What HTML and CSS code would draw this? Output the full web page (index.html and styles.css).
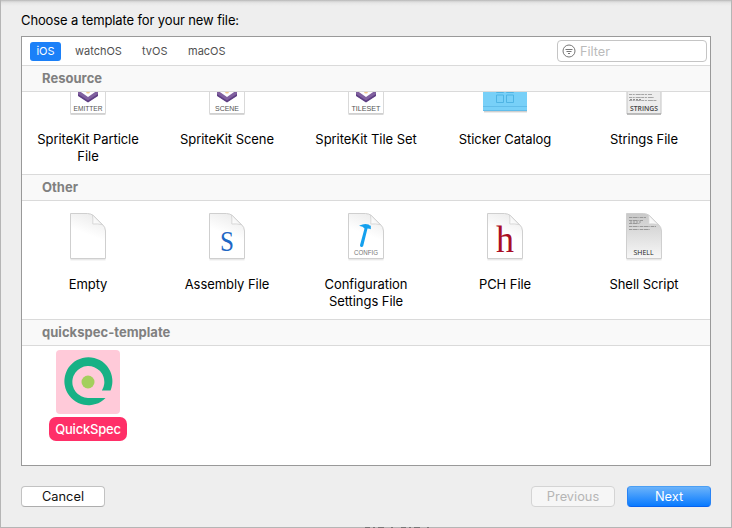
FILE: index.html
```html
<!DOCTYPE html>
<html lang="en">
<head>
<meta charset="utf-8">
<title>Choose a template</title>
<link rel="stylesheet" href="styles.css">
</head>
<body>
<svg class="defs" width="0" height="0">
  <defs>
    <linearGradient id="paper" gradientUnits="userSpaceOnUse" x1="28" y1="34" x2="38" y2="8"><stop offset=".2" stop-color="#fff"/><stop offset="1" stop-color="#ebebeb"/></linearGradient>
    <linearGradient id="script" x1="0" y1="0" x2="0" y2="1"><stop offset="0" stop-color="#c9c9c9"/><stop offset="1" stop-color="#f7f7f7"/></linearGradient>
    <linearGradient id="fold" x1="0" y1="1" x2="1" y2="0"><stop offset="0" stop-color="#fff"/><stop offset=".6" stop-color="#f4f4f4"/><stop offset="1" stop-color="#dcdcdc"/></linearGradient>
    <g id="outline">
      <path d="M14.500 54.800h35" stroke="#000" stroke-opacity=".13"/>
      <path d="M14.500 8.500h17Q35 8.500 38 11l8 8Q49.500 22 49.500 26v27.500h-35z" stroke="#cfcfcf"/>
    </g>
    <g id="corner"><path d="M36.500 9.800q.6 4 .3 9.200 5-.5 9.500.7z" fill="url(#fold)" stroke="#d0d0d0" stroke-width=".8"/></g>
    <g id="kit">
      <path d="M14.500 8.500h35v45h-35z" fill="#fff" stroke="#d9d9d9"/>
      <path d="M14.500 54.300h35" stroke="#000" stroke-opacity=".2"/>
      <path d="M22 30l10 7 10-7v5.500L32 42l-10-6.500z" fill="#80609f"/>
      <path d="M22 34l10 6.500L42 34v2L32 42.500 22 36z" fill="#5f3f84"/>
      <circle cx="32" cy="31.500" r="2" fill="#f3c98e"/>
    </g>
  </defs>
</svg>
<main class="sheet">
  <h1 class="prompt"><span>Choose a template for your new file:</span></h1>
  <section class="chooser">
    <nav class="toolbar">
      <span class="tab active">iOS</span>
      <span class="tab watch">watchOS</span>
      <span class="tab tv">tvOS</span>
      <span class="tab mac">macOS</span>
      <label class="filter">
        <svg width="14" height="14" viewBox="0 0 14 14" fill="none" stroke="#777"><circle cx="7" cy="7" r="6"/><path d="M3.500 5.500h7M4.500 7.500h5M6 9.500h2"/></svg>
        <span>Filter</span>
      </label>
    </nav>
    <h2 class="heading resource">Resource</h2>
    <div class="grid clipped">
      <div class="item"><svg class="icon" viewBox="0 0 64 64" fill="none"><use href="#kit"/><text x="32" y="51" textLength="29" lengthAdjust="spacingAndGlyphs" class="tag">EMITTER</text></svg><span class="w-particle">SpriteKit Particle<br>File</span></div>
      <div class="item"><svg class="icon" viewBox="0 0 64 64" fill="none"><use href="#kit"/><text x="32" y="51" textLength="24" lengthAdjust="spacingAndGlyphs" class="tag">SCENE</text></svg><span>SpriteKit Scene</span></div>
      <div class="item"><svg class="icon" viewBox="0 0 64 64" fill="none"><use href="#kit"/><text x="32" y="51" textLength="29" lengthAdjust="spacingAndGlyphs" class="tag">TILESET</text></svg><span>SpriteKit Tile Set</span></div>
      <div class="item"><svg class="icon" viewBox="0 0 64 64" fill="none"><path d="M11 51.800h43" stroke="#bbb"/><path d="M10 8h44v43H10z" fill="#78d0f8"/><path d="M10 46.500h44M10 50.500h44" stroke="#62bdea"/><path d="M23.500 24.500h7v8h-7zm10 0h7v8h-7zm-10 10.500h7v7.500h-7zm10 0h7v7.500h-7z" stroke="#4fb4e4"/></svg><span>Sticker Catalog</span></div>
      <div class="item"><svg class="icon" viewBox="0 0 64 64"><path d="M15 8h34v46H15z" fill="#ededed" stroke="#c4c4c4"/><path d="M15 54h34" stroke="#999"/><path d="M17 34.500h23M17 37.500h25M17 40.500h28" stroke="#a5a5a5" stroke-dasharray="3 .7 2 1 5 .5"/><path d="M18 39.500h11" stroke="#909090" stroke-dasharray="2 1"/><text x="32" y="50.500" textLength="28" lengthAdjust="spacingAndGlyphs" class="tag dark">STRINGS</text></svg><span>Strings File</span></div>
    </div>
    <h2 class="heading other">Other</h2>
    <div class="grid">
      <div class="item"><svg class="icon" viewBox="0 0 64 64" fill="url(#paper)"><use href="#outline"/><use href="#corner"/></svg><span>Empty</span></div>
      <div class="item"><svg class="icon" viewBox="0 0 64 64" fill="url(#paper)"><use href="#outline"/><use href="#corner"/><text x="32" y="46" class="letter blue" textLength="14" lengthAdjust="spacingAndGlyphs">S</text></svg><span>Assembly File</span></div>
      <div class="item"><svg class="icon" viewBox="0 0 64 64" fill="url(#paper)"><use href="#outline"/><use href="#corner"/><path d="M25.500 20.500q5-2.500 9-1 .8.300 1.200 1l1.100.3v3.500l-1.300-.5-2-.3-4.300 17.500q-.8 1.500-2.500.8-1-.5-.6-2L30.500 23.500q-1.500-2.600-5-2.500z" fill="#14a0ee"/><text x="32" y="50" textLength="24" lengthAdjust="spacingAndGlyphs" class="tag small">CONFIG</text></svg><span>Configuration<br>Settings File</span></div>
      <div class="item"><svg class="icon" viewBox="0 0 64 64" fill="url(#paper)"><use href="#outline"/><use href="#corner"/><text x="32" y="47" class="letter red" textLength="18" lengthAdjust="spacingAndGlyphs">h</text></svg><span>PCH File</span></div>
      <div class="item"><svg class="icon" viewBox="0 0 64 64" fill="url(#script)"><use href="#outline"/><use href="#corner"/><path d="M17 12.500h17M17 15.500h14M17 18.500h11M17 21.500h27M17 24.500h21" stroke="#999" stroke-dasharray="3 .6 5 .8 1 .6"/><path d="M18 17h12" stroke="#999" stroke-dasharray="2 1"/><text x="31.500" y="50" textLength="20" lengthAdjust="spacingAndGlyphs" class="tag shell">SHELL</text></svg><span>Shell Script</span></div>
    </div>
    <h2 class="heading quick">quickspec-template</h2>
    <div class="grid last">
      <div class="item selected"><svg class="icon" viewBox="0 0 64 64"><rect width="64" height="64" rx="4" fill="#ffcad9"/><path d="M45.900 40.500A16 16 0 1 0 32 48h17.500A24 24 0 1 1 54.500 40.500z" fill="#17b185"/><circle cx="32" cy="32" r="6.500" fill="#a4cf5d"/></svg><span>QuickSpec</span></div>
    </div>
  </section>
  <footer class="actions">
    <button class="button cancel">Cancel</button>
    <button class="button previous" disabled>Previous</button>
    <button class="button next">Next</button>
  </footer>
</main>
<svg class="edge" width="732" height="1"><path d="M365 .5h70" stroke="#777" stroke-dasharray="5 3 2 3 6 7 2 8"/></svg>
</body>
</html>
```
FILE: styles.css
```css
* { box-sizing: border-box; }
body { margin: 0; background: #b5b5b5; font: 13px/17px Inter, "Liberation Sans", sans-serif; letter-spacing: -.06px; color: #000; }
.defs, .edge { display: block; }
.sheet {
  width: 730px;
  height: 527px;
  margin-left: 1px;
  padding: 12px 20px 0;
  background: linear-gradient(#b1b1b1 0, #d0d0d0 1px, #e6e6e6 3px, #eee 6px);
}
.prompt { margin: 0; height: 24px; font-size: 13px; line-height: 17px; font-weight: 400; letter-spacing: -.12px; }
.chooser { width: 690px; height: 430px; border: 1px solid #999; background: #fff; overflow: hidden; }
.toolbar { height: 28px; display: flex; align-items: center; padding: 0 3px 0 8px; font-size: 11px; letter-spacing: 0; color: #505050; }
.tab { line-height: 19px; }
.active { width: 31px; text-align: center; border-radius: 3px; color: #fff; background: #1b80f8; margin-right: 14px; }
.watch { width: 67px; }
.tv { width: 46px; }
.filter { margin-left: auto; width: 150px; height: 22px; border: 1px solid #c5c5c5; border-radius: 4px; display: flex; align-items: center; padding-left: 4px; gap: 4px; color: #bbb; font-size: 12.7px; }
.heading { height: 27px; margin: 0; padding-left: 20px; border: solid #dadada; border-width: 1px 0; background: #f9f9f9; color: #808080; font-size: 13px; line-height: 25px; font-weight: 700; letter-spacing: .03px; }
.grid { height: 118px; padding: 4px 6px 0; display: grid; grid-template-columns: repeat(5, 120px); column-gap: 19px; align-items: start; }
.clipped { height: 82px; align-content: end; overflow: hidden; }
.clipped .item { height: 114px; }
.last { height: 120px; }
.item { display: flex; flex-direction: column; align-items: center; gap: 7px; text-align: center; white-space: nowrap; }
.icon { display: block; width: 64px; height: 64px; letter-spacing: 0; }
.selected { gap: 3px; }
.selected span { width: 78px; height: 24px; line-height: 24px; border-radius: 7px; background: #ff2f68; color: #fff; font-weight: 500; letter-spacing: -.2px; }
.tag { font: 7.5px "Liberation Sans", sans-serif; fill: #555; text-anchor: middle; }
.dark { font: 600 7px "Open Sans", sans-serif; fill: #444; }
.small { font-size: 7px; fill: #777; }
.shell { font: 7px "Open Sans", sans-serif; fill: #222; }
.letter { font-family: "Liberation Serif", serif; text-anchor: middle; }
.blue { font-size: 29px; fill: #1f68c5; }
.red { font-size: 38px; fill: #a90e25; }
.actions { display: flex; padding-top: 20px; }
.button { width: 84px; height: 21px; padding: 0; border: 1px solid #c2c2c2; border-bottom-color: #adadad; border-radius: 4px; background: #fff; color: #111; font: 12.8px/18px Inter, sans-serif; }
.previous { margin-left: auto; background: #f6f6f6; border-color: #d4d4d4; color: #b5b5b5; }
.next { margin-left: 12px; color: #fff; border-color: #4b9ff4 #2883f5 #0762ee; background: linear-gradient(#6bb3fa, #087aff); }
```
